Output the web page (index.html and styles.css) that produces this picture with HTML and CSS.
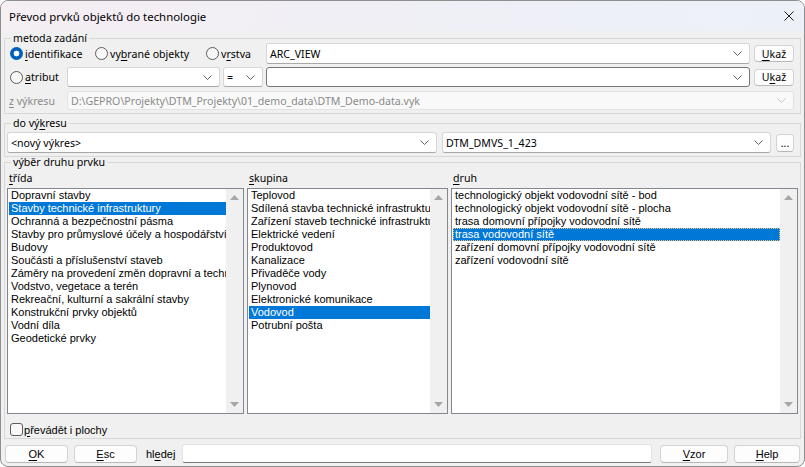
FILE: index.html
```html
<!DOCTYPE html>
<html lang="cs">
<head>
<meta charset="utf-8">
<title>Převod prvků objektů do technologie</title>
<link rel="stylesheet" href="styles.css">
</head>
<body>
<div class="window">
  <header class="titlebar">
    <span class="title">Převod prvků objektů do technologie</span>
    <svg class="close" width="10" height="10" viewBox="0 0 10 10"><path d="M0.5 0.5 L9.5 9.5 M9.5 0.5 L0.5 9.5" fill="none" stroke="#1c1c1c" stroke-width="1"/></svg>
  </header>
  <main class="content">
    <fieldset class="group group-metoda">
      <legend>metoda zadání</legend>
      <div class="row row-1">
        <label class="radio r-ident"><span class="radio-dot checked"></span><span><u>i</u>dentifikace</span></label>
        <label class="radio r-vybr"><span class="radio-dot"></span><span>vy<u>b</u>rané objekty</span></label>
        <label class="radio r-vrst"><span class="radio-dot"></span><span>v<u>r</u>stva</span></label>
        <div class="combo flex1"><span class="val">ARC_VIEW</span><svg class="chev" width="9" height="5" viewBox="0 0 9 5"><path d="M0.5 0.5 L4.5 4.5 L8.5 0.5" fill="none" stroke="#5f5f5f"/></svg></div>
        <button class="btn btn-ukaz"><u>U</u>kaž</button>
      </div>
      <div class="row row-2">
        <label class="radio r-atr"><span class="radio-dot"></span><span><u>a</u>tribut</span></label>
        <div class="combo c-attr"><span class="val"></span><svg class="chev" width="9" height="5" viewBox="0 0 9 5"><path d="M0.5 0.5 L4.5 4.5 L8.5 0.5" fill="none" stroke="#5f5f5f"/></svg></div>
        <div class="combo c-op"><span class="val">=</span><svg class="chev" width="9" height="5" viewBox="0 0 9 5"><path d="M0.5 0.5 L4.5 4.5 L8.5 0.5" fill="none" stroke="#5f5f5f"/></svg></div>
        <div class="combo flex1 dark"><span class="val"></span><svg class="chev" width="9" height="5" viewBox="0 0 9 5"><path d="M0.5 0.5 L4.5 4.5 L8.5 0.5" fill="none" stroke="#5f5f5f"/></svg></div>
        <button class="btn btn-ukaz">U<u>k</u>až</button>
      </div>
      <div class="row row-3">
        <span class="lbl-disabled"><u>z</u> výkresu</span>
        <div class="combo flex1 disabled"><span class="val">D:\GEPRO\Projekty\DTM_Projekty\01_demo_data\DTM_Demo-data.vyk</span><svg class="chev" width="9" height="5" viewBox="0 0 9 5"><path d="M0.5 0.5 L4.5 4.5 L8.5 0.5" fill="none" stroke="#c4c4c4"/></svg></div>
      </div>
    </fieldset>

    <fieldset class="group group-do">
      <legend>do vý<u>k</u>resu</legend>
      <div class="row row-do">
        <div class="combo c-novy"><span class="val">&lt;nový výkres&gt;</span><svg class="chev" width="9" height="5" viewBox="0 0 9 5"><path d="M0.5 0.5 L4.5 4.5 L8.5 0.5" fill="none" stroke="#5f5f5f"/></svg></div>
        <div class="combo flex1"><span class="val">DTM_DMVS_1_423</span><svg class="chev" width="9" height="5" viewBox="0 0 9 5"><path d="M0.5 0.5 L4.5 4.5 L8.5 0.5" fill="none" stroke="#5f5f5f"/></svg></div>
        <button class="btn btn-dots">...</button>
      </div>
    </fieldset>

    <fieldset class="group group-vyber">
      <legend>výběr druhu prvku</legend>
      <div class="lists">
        <div class="col-label"><u>t</u>řída</div>
        <div class="col-label"><u>s</u>kupina</div>
        <div class="col-label"><u>d</u>ruh</div>

        <div class="listbox">
          <ul class="items">
            <li>Dopravní stavby</li>
            <li class="sel">Stavby technické infrastruktury</li>
            <li>Ochranná a bezpečnostní pásma</li>
            <li>Stavby pro průmyslové účely a hospodářství</li>
            <li>Budovy</li>
            <li>Součásti a příslušenství staveb</li>
            <li>Záměry na provedení změn dopravní a technické infrastruktury</li>
            <li>Vodstvo, vegetace a terén</li>
            <li>Rekreační, kulturní a sakrální stavby</li>
            <li>Konstrukční prvky objektů</li>
            <li>Vodní díla</li>
            <li>Geodetické prvky</li>
          </ul>
          <div class="vscroll"><svg width="9" height="5" viewBox="0 0 9 5"><path d="M0 5 L4.5 0 L9 5 Z" fill="#a6a6a6"/></svg><svg width="9" height="5" viewBox="0 0 9 5"><path d="M0 0 L4.5 5 L9 0 Z" fill="#a6a6a6"/></svg></div>
        </div>

        <div class="listbox">
          <ul class="items">
            <li>Teplovod</li>
            <li>Sdílená stavba technické infrastruktury</li>
            <li>Zařízení staveb technické infrastruktury</li>
            <li>Elektrické vedení</li>
            <li>Produktovod</li>
            <li>Kanalizace</li>
            <li>Přivaděče vody</li>
            <li>Plynovod</li>
            <li>Elektronické komunikace</li>
            <li class="sel">Vodovod</li>
            <li>Potrubní pošta</li>
          </ul>
          <div class="vscroll"><svg width="9" height="5" viewBox="0 0 9 5"><path d="M0 5 L4.5 0 L9 5 Z" fill="#a6a6a6"/></svg><svg width="9" height="5" viewBox="0 0 9 5"><path d="M0 0 L4.5 5 L9 0 Z" fill="#a6a6a6"/></svg></div>
        </div>

        <div class="listbox">
          <ul class="items">
            <li>technologický objekt vodovodní sítě - bod</li>
            <li>technologický objekt vodovodní sítě - plocha</li>
            <li>trasa domovní přípojky vodovodní sítě</li>
            <li class="sel focus">trasa vodovodní sítě</li>
            <li>zařízení domovní přípojky vodovodní sítě</li>
            <li>zařízení vodovodní sítě</li>
          </ul>
          <div class="vscroll"><svg width="9" height="5" viewBox="0 0 9 5"><path d="M0 5 L4.5 0 L9 5 Z" fill="#a6a6a6"/></svg><svg width="9" height="5" viewBox="0 0 9 5"><path d="M0 0 L4.5 5 L9 0 Z" fill="#a6a6a6"/></svg></div>
        </div>
      </div>
      <label class="check"><span class="check-box"></span><span><u>p</u>řevádět i plochy</span></label>
    </fieldset>

    <div class="bottom">
      <button class="btn2 b-ok"><u>O</u>K</button>
      <button class="btn2 b-esc"><u>E</u>sc</button>
      <span class="hledej">hl<u>e</u>dej</span>
      <div class="search"></div>
      <button class="btn2 b-vzor"><u>V</u>zor</button>
      <button class="btn2 b-help"><u>H</u>elp</button>
    </div>
  </main>
</div>
</body>
</html>
```

FILE: styles.css
```css
* { box-sizing: border-box; }
html, body { margin: 0; padding: 0; }
body {
  width: 805px;
  height: 467px;
  overflow: hidden;
  background: #ffffff;
  font-family: "Noto Sans", "Liberation Sans", sans-serif;
  font-size: 10.6px;
  color: #000;
}
u { text-decoration-thickness: 1px; text-underline-offset: 2px; }

.window {
  width: 805px;
  height: 467px;
  border: 1px solid #8e8e8e;
  border-radius: 8px;
  background: #f0f0f0;
  display: flex;
  flex-direction: column;
  overflow: hidden;
}

.titlebar {
  height: 30px;
  flex: none;
  display: flex;
  align-items: center;
  justify-content: space-between;
  padding: 0 10px 0 8px;
  background: linear-gradient(to right, #f5eef3 0%, #f0eff6 45%, #ecf1f8 100%);
}
.title { font-size: 11.4px; color: #000; }
.close { display: block; }

.content {
  flex: 1;
  display: flex;
  flex-direction: column;
  padding: 2px 3px 0 3px;
}

.group {
  margin: 0;
  min-width: 0;
  border: 1px solid #d8d8d8;
  padding: 0 6px 3px 2px;
}
.group legend {
  margin-left: 4px;
  padding: 0 2px;
  line-height: 10px;
  font-size: 10.6px;
}

.row { display: flex; align-items: center; }
.row-1 { height: 21px; }
.row-2 { height: 20px; margin-top: 3px; }
.row-3 { height: 19px; margin-top: 4px; }

.radio { display: flex; align-items: center; height: 100%; flex: none; white-space: nowrap; }
.radio-dot {
  width: 13px; height: 13px;
  border: 1px solid #5c5c5c;
  border-radius: 50%;
  background: #f7f7f7;
  margin-right: 2px;
  flex: none;
}
.radio-dot.checked {
  border: none;
  background: radial-gradient(circle, #ffffff 0 2.6px, #005fb8 3.2px);
}
.r-ident { width: 85px; margin-left: 3px; }
.r-vybr { width: 111px; }
.r-vrst { width: 60px; }
.r-atr { width: 57px; margin-left: 3px; }

.combo {
  display: flex;
  align-items: center;
  height: 100%;
  background: #ffffff;
  border: 1px solid #d6d6d6;
  border-bottom-color: #a8a8a8;
  border-radius: 3px;
  padding: 0 7px 0 3px;
  min-width: 0;
}
.combo .val { flex: 1; white-space: nowrap; overflow: hidden; }
.combo .chev { flex: none; }
.flex1 { flex: 1; }
.combo.dark { border-color: #777777; }
.combo.disabled { background: #f9f9f9; border-color: #e2e2e2; color: #8a8a8a; }
.c-attr { width: 153px; flex: none; }
.c-op { width: 40px; flex: none; margin-left: 3px; margin-right: 3px; }
.c-novy { width: 430px; flex: none; margin-right: 5px; }

.btn {
  font-family: "Noto Sans", sans-serif;
  font-size: 10.6px;
  background: #fdfdfd;
  border: 1px solid #d3d3d3;
  border-bottom-color: #b8b8b8;
  border-radius: 4px;
  padding: 0;
  color: #000;
  flex: none;
}
.btn-ukaz { width: 40px; height: 17px; margin-left: 4px; line-height: 14px; }
.btn-dots { width: 18px; height: 18px; margin-left: 5px; line-height: 12px; }

.lbl-disabled { width: 60px; flex: none; padding-left: 2px; color: #8a8a8a; }

.group-do { margin-top: 4px; padding-top: 4px; }
.row-do { height: 21px; }

.group-vyber { flex: none; padding: 0 2px 2px 2px; }
.lists {
  display: grid;
  grid-template-columns: 237px 201px 1fr;
  grid-template-rows: 21px 226px;
  column-gap: 3px;
}
.col-label { padding-left: 2px; display: flex; align-items: center; }

.listbox {
  display: flex;
  background: #ffffff;
  border: 1px solid #828790;
  min-width: 0;
  overflow: hidden;
}
.items {
  list-style: none;
  margin: 0;
  padding: 0 0 0 1px;
  flex: 1;
  min-width: 0;
  font-family: "Liberation Sans", Arial, sans-serif;
  font-size: 11px;
}
.items li {
  height: 13px;
  line-height: 13px;
  padding-left: 2px;
  white-space: nowrap;
  overflow: hidden;
}
.items li.sel { background: #0078d7; color: #ffffff; }
.items li.focus { outline: 1px dotted #f2c47a; outline-offset: -1px; }
.vscroll {
  width: 17px;
  flex: none;
  background: #f0f0f0;
  display: flex;
  flex-direction: column;
  justify-content: space-between;
  align-items: center;
  padding: 6px 0 6px;
}
.vscroll svg { display: block; }

.check {
  display: flex;
  align-items: center;
  height: 13px;
  margin: 9px 0 0 3px;
  font-family: "Liberation Sans", Arial, sans-serif;
  font-size: 11px;
}
.check-box {
  width: 13px; height: 13px;
  border: 1px solid #5c5c5c;
  border-radius: 3px;
  background: #f9f9f9;
  margin-right: 1px;
}

.bottom {
  display: flex;
  align-items: center;
  height: 19px;
  margin: 5px 1px 0 1px;
  font-family: "Liberation Sans", Arial, sans-serif;
  font-size: 11px;
}
.btn2 {
  font-family: "Liberation Sans", Arial, sans-serif;
  font-size: 11px;
  height: 18px;
  background: #fdfdfd;
  border: 1px solid #d3d3d3;
  border-bottom-color: #b8b8b8;
  border-radius: 4px;
  padding: 0;
  color: #000;
  flex: none;
}
.b-ok { width: 63px; }
.b-esc { width: 63px; margin-left: 6px; }
.hledej { margin-left: 9px; width: 36px; flex: none; }
.search {
  flex: 1;
  height: 19px;
  background: #ffffff;
  border: 1px solid #e3e3e3;
  border-bottom-color: #7a7a7a;
  border-radius: 3px;
}
.b-vzor { width: 68px; margin-left: 8px; }
.b-help { width: 66px; margin-left: 6px; }
```
